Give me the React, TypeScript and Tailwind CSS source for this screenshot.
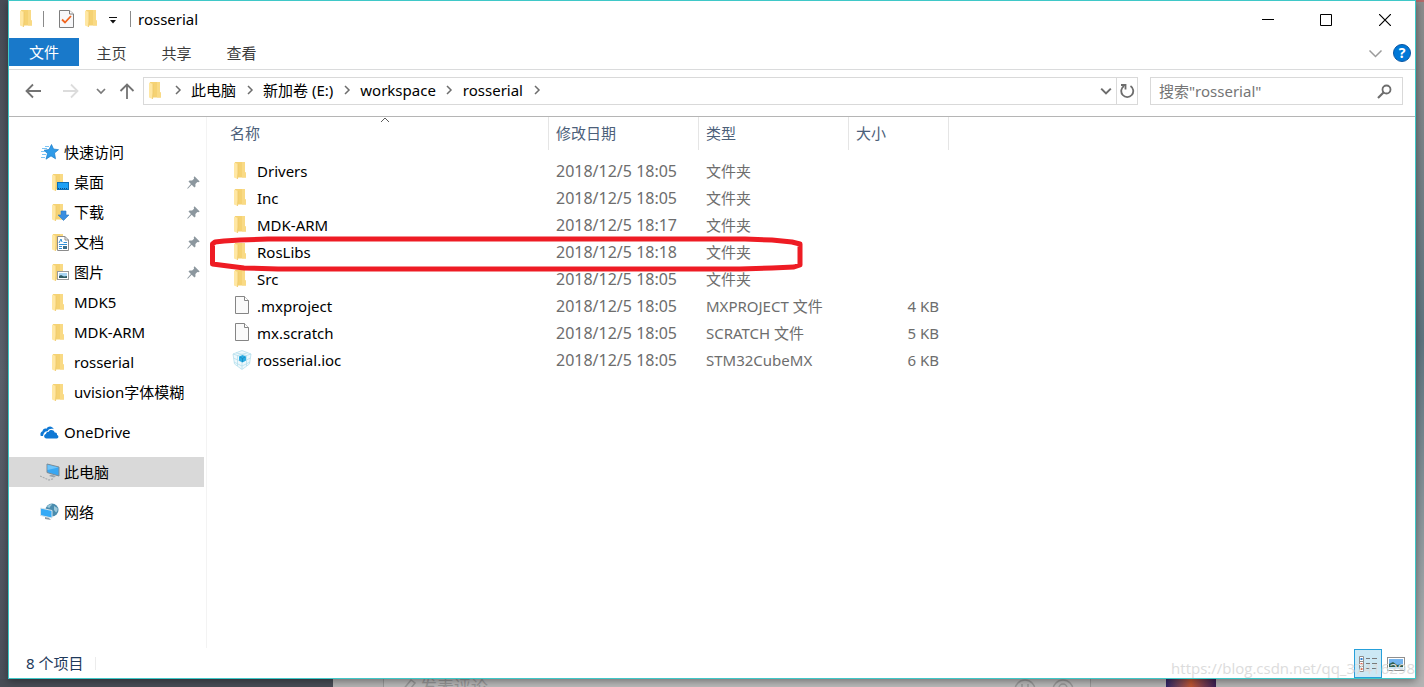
import React, { useState } from 'react';

type IconKind = 'folder' | 'desktop' | 'download' | 'document' | 'picture';

interface QuickItem {
  name: string;
  icon: IconKind;
  pinned: boolean;
}

interface FileRow {
  name: string;
  date: string;
  type: string;
  size: string;
  icon: 'folder' | 'file' | 'cube';
}

const quickItems: QuickItem[] = [
  { name: '桌面', icon: 'desktop', pinned: true },
  { name: '下载', icon: 'download', pinned: true },
  { name: '文档', icon: 'document', pinned: true },
  { name: '图片', icon: 'picture', pinned: true },
  { name: 'MDK5', icon: 'folder', pinned: false },
  { name: 'MDK-ARM', icon: 'folder', pinned: false },
  { name: 'rosserial', icon: 'folder', pinned: false },
  { name: 'uvision字体模糊', icon: 'folder', pinned: false },
];

const files: FileRow[] = [
  { name: 'Drivers', date: '2018/12/5 18:05', type: '文件夹', size: '', icon: 'folder' },
  { name: 'Inc', date: '2018/12/5 18:05', type: '文件夹', size: '', icon: 'folder' },
  { name: 'MDK-ARM', date: '2018/12/5 18:17', type: '文件夹', size: '', icon: 'folder' },
  { name: 'RosLibs', date: '2018/12/5 18:18', type: '文件夹', size: '', icon: 'folder' },
  { name: 'Src', date: '2018/12/5 18:05', type: '文件夹', size: '', icon: 'folder' },
  { name: '.mxproject', date: '2018/12/5 18:05', type: 'MXPROJECT 文件', size: '4 KB', icon: 'file' },
  { name: 'mx.scratch', date: '2018/12/5 18:05', type: 'SCRATCH 文件', size: '5 KB', icon: 'file' },
  { name: 'rosserial.ioc', date: '2018/12/5 18:05', type: 'STM32CubeMX', size: '6 KB', icon: 'cube' },
];

const crumbs = ['此电脑', '新加卷 (E:)', 'workspace', 'rosserial'];

/* ---------- icons ---------- */

const FolderShape = () => (
  <>
    <path d="M1 0H11V10L12 11V15.500H3Z" fill="#f5d273" />
    <path d="M8 0H11V10L12 11V15.500H8Z" fill="#f9da85" />
    <path d="M0 0.500L4 2V11L3.500 17L0 15.500Z" fill="#ffe7a3" />
    <path d="M4 2V11L3.500 17" fill="none" stroke="#eec868" strokeWidth="0.800" />
  </>
);

const FolderIcon = () => (
  <svg width="12" height="17" viewBox="0 0 12 17" className="shrink-0">
    <FolderShape />
  </svg>
);

const QuickIcon = ({ kind }: { kind: IconKind }) => (
  <svg width="18" height="17" viewBox="0 0 18 17" className="shrink-0">
    <FolderShape />
    {kind === 'desktop' && (
      <>
        <rect x="5.500" y="8.500" width="11" height="7" fill="#1ea0f5" stroke="#0d6fb8" />
        <path d="M6 14.500H16" stroke="#0b4f86" strokeDasharray="1 1" />
      </>
    )}
    {kind === 'download' && <path d="M9 7H14V11H17L11.500 16.500L6 11H9Z" fill="#3a8ee0" stroke="#2b78c4" strokeWidth="0.600" />}
    {kind === 'document' && (
      <>
        <path d="M5.500 2.500H13L16.500 6V16.500H5.500Z" fill="#fff" stroke="#8c8c8c" />
        <path d="M13 2.500V6H16.500" fill="none" stroke="#8c8c8c" />
        <path d="M7 9L9 5L10 8M11.500 8.500H15M7 10.500H15M7 12.500H10M7 14.500H10" fill="none" stroke="#2f8fd6" />
        <rect x="11" y="12" width="4" height="3" fill="#3b6e8c" />
      </>
    )}
    {kind === 'picture' && (
      <>
        <rect x="5.500" y="7.500" width="11" height="8" fill="#fff" stroke="#9a9a9a" />
        <rect x="7" y="9" width="8" height="5" fill="#a9d4f2" />
        <path d="M7 14V12L9 11L12 12.500L15 12V14Z" fill="#2f5b62" />
      </>
    )}
  </svg>
);

const PinIcon = () => (
  <svg width="13" height="13" viewBox="0 0 13 13" className="shrink-0" fill="#8c979e">
    <path d="M7.500 0.300L12.700 5.500L11.300 6.300L10.300 5.900L8.400 7.900L8.500 10.500L7.400 11.400L4.700 8.800L0.800 12.700L0.200 12.200L3.900 8L1.500 5.600L2.500 4.500L5.100 4.600L7.100 2.700L6.700 1.600Z" />
  </svg>
);

const StarIcon = () => (
  <svg width="19" height="16" viewBox="0 0 19 16" className="shrink-0">
    <path d="M10.500 0.500L12.500 5L17.500 5.700L13.500 9L14.500 14.800L10 11.900L5 15.200L6.500 9.500L3 6.300L8 5.500Z" fill="#2f9be8" stroke="#1c7cc9" strokeWidth="0.700" />
    <path d="M4 2.500H8M1 4.500H6M0 7.500H4M1 10.500H5M0 13.500H4" stroke="#7cc4f4" strokeWidth="1" />
  </svg>
);

const OneDriveIcon = () => (
  <svg width="19" height="13" viewBox="0 0 19 13" className="shrink-0">
    <path d="M3 10H0.800C0 8 0.500 5.800 2.500 5.200C2.500 3 5 1.800 6.500 2.700C8 0 12 -0.500 13.800 3.200C11 2.300 8.500 3.200 7.700 5.200C5 5 3.500 7 3 10Z" fill="#0f78d4" />
    <path d="M6.500 12.500C3.500 12.300 3.500 8.500 6 8C6.200 6 7.500 5.800 8.500 6C9.500 3.500 13.500 3.300 14.700 6.500C16.500 6.300 17.300 7.500 17 9C19 9.500 18.800 12.500 16.800 12.500Z" fill="#0f78d4" />
  </svg>
);

const ThisPcIcon = () => (
  <svg width="20" height="18" viewBox="0 0 20 18" className="shrink-0">
    <path d="M7 1L19 4V13L7 9.500Z" fill="#3aa7f2" stroke="#7e8b94" strokeWidth="1" />
    <path d="M7.500 1.800L18.500 4.500L7.500 7Z" fill="#6cc3fa" />
    <path d="M11 11.500L16 13L14 14.500L9 13Z" fill="#9aa5ad" />
    <path d="M0 13L9 17L14 15.500" fill="none" stroke="#a9adb0" strokeWidth="1.200" strokeDasharray="2 1" />
  </svg>
);

const NetworkIcon = () => (
  <svg width="19" height="18" viewBox="0 0 19 18" className="shrink-0">
    <circle cx="12" cy="7" r="6.500" fill="#4a8cae" />
    <path d="M7 4C8 2 10 1 12 1C11.500 3 10 3 9.500 5ZM14 3L17.500 5C18 7 17 9 16 9.500L14 7Z" fill="#9cc8da" />
    <path d="M0.500 5L12 7.500V15L0.500 12.500Z" fill="#35aaf6" stroke="#d8e4ea" strokeWidth="1" />
    <path d="M5 14L9 15L11 17L5 16Z" fill="#8d9aa3" />
  </svg>
);

const FileIcon = () => (
  <svg width="16" height="19" viewBox="0 0 16 19" className="shrink-0">
    <path d="M1.500 0.500H10.500L14.500 4.500V17.500H1.500Z" fill="#fafafa" stroke="#858585" />
    <path d="M10.500 0.500V4.500H14.500" fill="#fff" stroke="#858585" />
  </svg>
);

const CubeIcon = () => (
  <svg width="20" height="20" viewBox="0 0 20 20" className="shrink-0" fill="none">
    <path d="M1 4L10 0.500L19 4L17.500 14L10 19.500L2.500 14Z" fill="#eef8fc" stroke="#c4e5f0" />
    <path d="M1 4L10 7L19 4M10 7V19M1.500 8L10 12L18.500 8M2 12L10 16L18 12M4 2.800L14.500 5.500M15.500 2.800L5.500 5.500M5.500 5.500V16M14.500 5.500V16" stroke="#b4deec" strokeWidth="0.800" />
    <path d="M7 6.500L10.500 5L14 6.500V10.500L10.500 12.500L7 10.500Z" fill="#29abe2" />
    <path d="M10.500 8.500V12M8 7L10.500 8.500L13 7" stroke="#1588bd" strokeWidth="0.800" />
  </svg>
);

const Chevron = ({ dir, color = '#6d6d6d', size = 10, weight = 1.5 }: { dir: 'down' | 'right' | 'up'; color?: string; size?: number; weight?: number }) => {
  const d = dir === 'down' ? 'M1 3L5 7L9 3' : dir === 'up' ? 'M1 7L5 3L9 7' : 'M3 1L7 5L3 9';
  return (
    <svg width={size} height={size} viewBox="0 0 10 10" fill="none" stroke={color} strokeWidth={weight}>
      <path d={d} />
    </svg>
  );
};

const Arrow = ({ d, color }: { d: string; color: string }) => (
  <svg width="16" height="16" viewBox="0 0 16 16" fill="none" stroke={color} strokeWidth="1.800">
    <path d={d} />
  </svg>
);

/* ---------- parts ---------- */

// page that shows around the window edges
const Desktop = () => (
  <div aria-hidden="true" className="absolute inset-0 flex flex-col overflow-hidden">
    <div className="flex flex-1 justify-between">
      <div className="w-2 bg-linear-to-b from-[#484d57] via-[#5b626d] via-55% to-[#4b505b]" />
      <div className="flex w-2 flex-col">
        <div className="h-0.5 bg-[#b56a6a]" />
        <div className="flex-1 bg-linear-to-b from-[#8d8d8d] via-[#5f7580] via-50% to-[#b4b4b4]" />
      </div>
    </div>
    <div className="flex h-2 overflow-hidden bg-[#b4b4b4] text-[#979797]">
      <div className="w-[333px] bg-[#484d56]" />
      <div className="w-[51px] border-r border-[#999]" />
      <div className="flex flex-1 items-start justify-between bg-[#bababa] px-4">
        <span className="flex items-start gap-1 text-[17px] leading-4">
          <svg width="16" height="16" viewBox="0 0 16 16" fill="none" stroke="#979797" strokeWidth="1.500">
            <path d="M2 12L11 1L15 4L7 14" />
          </svg>
          发表评论
        </span>
        <span className="flex items-start gap-4">
          <svg width="22" height="22" viewBox="0 0 22 22" fill="none" stroke="#979797" strokeWidth="1.500">
            <circle cx="11" cy="11" r="10" />
            <path d="M8 5V9M14 5V9" />
          </svg>
          <svg width="22" height="22" viewBox="0 0 22 22" fill="none" stroke="#979797" strokeWidth="1.500">
            <circle cx="11" cy="11" r="10" />
            <circle cx="11" cy="9" r="4" />
          </svg>
        </span>
      </div>
      <div className="w-[76px] border-l border-[#999]" />
      <div className="w-[50px] bg-linear-to-r from-[#2e2466] via-[#c0562f] to-[#3a1d54]" />
      <div className="w-[208px]" />
    </div>
  </div>
);

const TitleBar = () => (
  <header className="flex h-[37px] items-center">
    <div className="flex flex-1 items-center pb-0.5 pl-[11px]">
      <FolderIcon />
      <span className="ml-[11px] h-4 w-px bg-[#8a8a8a]" />
      <button type="button" aria-label="属性" className="ml-[15px]">
        <svg width="15" height="18" viewBox="0 0 15 18" fill="none">
          <path d="M0.500 0.500H10.500L14.500 4V17.500H0.500Z" fill="#f7f7f9" stroke="#7d7d7d" />
          <path d="M10.500 0.500V4H14.500" fill="#fff" stroke="#7d7d7d" />
          <path d="M3 9.500L6 12.500L12 6" stroke="#f0641e" strokeWidth="1.800" />
        </svg>
      </button>
      <button type="button" aria-label="新建文件夹" className="ml-[11px]">
        <FolderIcon />
      </button>
      <button type="button" aria-label="自定义快速访问工具栏" className="ml-3 pt-1">
        <svg width="8" height="7" viewBox="0 0 8 7" fill="#111">
          <path d="M0 0H8V1H0ZM1 3H7L4 6.500Z" />
        </svg>
      </button>
      <span className="ml-[13px] h-4 w-px bg-[#8a8a8a]" />
      <h1 className="ml-[7px]">rosserial</h1>
    </div>
    <div className="flex h-full">
      <button type="button" aria-label="最小化" className="flex w-[58px] items-center justify-center">
        <svg width="12" height="12" viewBox="0 0 12 12" stroke="#000"><path d="M0 5.500H12" /></svg>
      </button>
      <button type="button" aria-label="最大化" className="flex w-[58px] items-center justify-center">
        <svg width="12" height="12" viewBox="0 0 12 12" fill="none" stroke="#000"><path d="M0.500 0.500H11.500V11.500H0.500Z" /></svg>
      </button>
      <button type="button" aria-label="关闭" className="flex w-[60px] items-center justify-center">
        <svg width="12" height="12" viewBox="0 0 12 12" stroke="#000" strokeWidth="1.200"><path d="M0 0L12 12M12 0L0 12" /></svg>
      </button>
    </div>
  </header>
);

const RibbonTabs = () => (
  <div className="flex h-8 items-start justify-between border-b border-[#dadbdc]">
    <nav className="flex">
      <button type="button" className="h-7 w-[70px] bg-[#1979ca] text-white">文件</button>
      {['主页', '共享', '查看'].map((tab) => (
        <button key={tab} type="button" className="h-[30px] w-[65px] text-[#3c3c3c]">{tab}</button>
      ))}
    </nav>
    <div className="flex h-[30px] items-center gap-[10px] pr-1">
      <button type="button" aria-label="展开功能区">
        <Chevron dir="down" color="#9b9b9b" size={15} weight={1} />
      </button>
      <button type="button" aria-label="帮助" className="flex size-[18px] items-center justify-center rounded-full border border-[#0a57a4] bg-[#0078d7] text-sm leading-4 font-bold text-white">
        ?
      </button>
    </div>
  </div>
);

const AddressBar = () => {
  const [query, setQuery] = useState('');

  return (
    <div className="flex h-[47px] items-center border-b border-[#b5b5b5] pr-3 pb-1 pl-3">
      <button type="button" aria-label="后退" className="flex w-6 justify-center">
        <Arrow d="M16 8H1.500M8 1.500L1.500 8L8 14.500" color="#737373" />
      </button>
      <button type="button" aria-label="前进" className="ml-[14px] flex w-6 justify-center">
        <Arrow d="M0 8H14.500M8 1.500L14.500 8L8 14.500" color="#dcdcdc" />
      </button>
      <button type="button" aria-label="最近位置" className="ml-[10px] flex w-4 justify-center">
        <Chevron dir="down" color="#7a7a7a" weight={1.7} />
      </button>
      <button type="button" aria-label="上移" className="ml-[6px] flex w-6 justify-center">
        <Arrow d="M8 16V1.500M1.500 8L8 1.500L14.500 8" color="#737373" />
      </button>

      <div className="ml-1 flex h-7 flex-1 items-center border border-[#d9d9d9] pb-0.5 pl-[5px]">
        <FolderIcon />
        <span className="ml-1 flex w-[26px] justify-center"><Chevron dir="right" /></span>
        {crumbs.map((crumb) => (
          <React.Fragment key={crumb}>
            <button type="button" className="text-black">{crumb}</button>
            <span className="flex w-[27px] justify-center"><Chevron dir="right" /></span>
          </React.Fragment>
        ))}
        <button type="button" aria-label="以前的位置" className="mr-1 ml-auto pt-0.5">
          <Chevron dir="down" color="#6d6d6d" size={12} weight={1.7} />
        </button>
        <button type="button" aria-label="刷新" className="-mb-0.5 flex h-[26px] w-[21px] items-center justify-center border-l border-[#d9d9d9]">
          <svg width="15" height="16" viewBox="0 0 15 16" fill="none" stroke="#6d6d6d" strokeWidth="1.800">
            <path d="M10.500 3A6 6 0 1 1 4 3" />
            <path d="M1 2H5.500V6.500" />
          </svg>
        </button>
      </div>

      <div className="ml-3 flex h-7 w-[253px] items-center border border-[#d9d9d9] pr-[10px] pl-2">
        <input
          type="text"
          aria-label='搜索"rosserial"'
          placeholder='搜索"rosserial"'
          value={query}
          onChange={(e) => setQuery(e.target.value)}
          className="min-w-0 flex-1 outline-none placeholder:text-[#757575]"
        />
        <svg width="15" height="15" viewBox="0 0 15 15" fill="none" stroke="#6d6d6d">
          <circle cx="9.500" cy="5.500" r="4" strokeWidth="1.800" />
          <path d="M6.500 8.500L1 14" strokeWidth="2.200" />
        </svg>
      </div>
    </div>
  );
};

const Sidebar = () => (
  <aside className="flex w-[198px] shrink-0 flex-col gap-[10px] border-r border-[#f3f3f3] pt-5 pr-0.5">
    <div>
      <a href="#quick" className="flex h-[30px] items-center gap-1 pl-8">
        <StarIcon />
        快速访问
      </a>
      <ul>
        {quickItems.map((item) => (
          <li key={item.name}>
            <a href="#folder" className="flex h-[30px] items-center gap-1 pr-1 pl-[43px]">
              <QuickIcon kind={item.icon} />
              <span className="flex-1">{item.name}</span>
              {item.pinned && <PinIcon />}
            </a>
          </li>
        ))}
      </ul>
    </div>
    <a href="#onedrive" className="flex h-[30px] items-center gap-[5px] pl-[31px]">
      <OneDriveIcon />
      OneDrive
    </a>
    <a href="#pc" className="flex h-[30px] items-center gap-1 bg-[#d9d9d9] pl-[31px]">
      <ThisPcIcon />
      此电脑
    </a>
    <a href="#network" className="flex h-[30px] items-center gap-[5px] pl-[31px]">
      <NetworkIcon />
      网络
    </a>
  </aside>
);

const FileTable = () => (
  <main className="relative min-w-0 flex-1">
    <table className="w-[742px] table-fixed border-collapse text-left">
      <colgroup>
        <col className="w-[342px]" />
        <col className="w-[150px]" />
        <col className="w-[150px]" />
        <col className="w-[100px]" />
      </colgroup>
      <thead className="text-[#4c607a]">
        <tr className="h-[33px]">
          <th className="relative p-0 pb-0.5 pl-[23px] font-normal shadow-[inset_-1px_0_#e5e5e5]">
            名称
            <span className="absolute -top-0.5 left-[173px]"><Chevron dir="up" color="#5a5a5a" weight={1} /></span>
          </th>
          <th className="p-0 pb-0.5 pl-[7px] font-normal shadow-[inset_-1px_0_#e5e5e5]">修改日期</th>
          <th className="p-0 pb-0.5 pl-[7px] font-normal shadow-[inset_-1px_0_#e5e5e5]">类型</th>
          <th className="p-0 pb-0.5 pl-[7px] font-normal shadow-[inset_-1px_0_#e5e5e5]">大小</th>
        </tr>
      </thead>
      <tbody className="text-[#6d6d6d] before:block before:h-[7px]">
        {files.map((file) => (
          <tr key={file.name} className="h-[27px]">
            <td className="p-0 pl-[25px] text-black">
              <span className="flex items-center gap-[5px]">
                <span className="flex w-5 justify-start">
                  {file.icon === 'folder' && <span className="pl-0.5"><FolderIcon /></span>}
                  {file.icon === 'file' && <span className="pl-0.5"><FileIcon /></span>}
                  {file.icon === 'cube' && <CubeIcon />}
                </span>
                {file.name}
              </span>
            </td>
            <td className="p-0 pl-[7px] text-base leading-5">{file.date}</td>
            <td className="p-0 pl-[7px] whitespace-nowrap">{file.type}</td>
            <td className="p-0 pr-[10px] text-right">{file.size}</td>
          </tr>
        ))}
      </tbody>
    </table>

    {/* hand-drawn marker round RosLibs */}
    <svg width="594" height="36" viewBox="0 0 594 36" fill="none" stroke="#ee1c24" strokeWidth="5" strokeLinejoin="round" className="pointer-events-none absolute top-[119px] left-[3px]">
      <path d="M2.500 8L5 6L14 5L30 4L58 3H535L562 4L582 6L590 8V29L584 31L562 32L530 33H68L34 32L18 30L2.500 28Z" />
    </svg>
  </main>
);

const StatusBar = () => {
  const [view, setView] = useState<'details' | 'large'>('details');

  return (
    <footer className="flex h-[30px] items-center justify-between pr-[10px] pl-[17px] text-[#1e395b]">
      <div className="flex items-center gap-3">
        <span>8 个项目</span>
        <span className="h-[13px] w-px bg-[#ececec]" />
      </div>
      <div className="flex h-full items-center gap-[5px] pt-px">
        <button
          type="button"
          aria-label="详细信息"
          aria-pressed={view === 'details'}
          onClick={() => setView('details')}
          className="flex h-full w-7 items-center justify-center border border-[#26a0da] bg-[#cce8f4]"
        >
          <svg width="18" height="16" viewBox="0 0 18 16" fill="none">
            <path d="M0.500 0.500H4.500V15.500H0.500ZM0.500 5.500H4.500M0.500 10.500H4.500" fill="#fff" stroke="#8f8f8f" />
            <path d="M7 2.500H11M13 2.500H18M7 7.500H11M13 7.500H18M7 12.500H11M13 12.500H18" stroke="#7a7a7a" />
            <path d="M1.500 3H3.500" stroke="#2f7fd0" strokeWidth="2" />
            <path d="M1.500 8H3.500M1.500 13H3.500" stroke="#e0614c" strokeWidth="2" />
          </svg>
        </button>
        <button type="button" aria-label="大图标" onClick={() => setView('large')}>
          <svg width="18" height="14" viewBox="0 0 18 14">
            <rect x="0.500" y="0.500" width="17" height="13" fill="#fff" stroke="#8f8f8f" />
            <rect x="2" y="2" width="14" height="10" fill="#74b4ee" />
            <path d="M2 7L6 5L10 8L16 7V10H2Z" fill="#2f5d4c" />
            <path d="M2 10H16V12H2Z" fill="#cfe6f7" />
          </svg>
        </button>
      </div>
    </footer>
  );
};

const App: React.FC = () => {
  return (
    <div className="relative flex min-h-screen px-2 pb-2 font-['Noto_Sans','Noto_Sans_CJK_SC',sans-serif] text-[15px] leading-5 text-black">
      <Desktop />
      <div className="relative flex min-w-0 flex-1 flex-col border border-[#3fc8c8] bg-white shadow-[0_2px_8px_rgba(0,0,0,0.4)]">
        <TitleBar />
        <RibbonTabs />
        <AddressBar />
        <div className="flex flex-1">
          <Sidebar />
          <FileTable />
        </div>
        <StatusBar />
        <span className="pointer-events-none absolute right-0 bottom-0 font-['Open_Sans',sans-serif] text-[15px] text-[#dcdcdc]">
          https://blog.csdn.net/qq_37416298
        </span>
      </div>
    </div>
  );
};

export default App;
